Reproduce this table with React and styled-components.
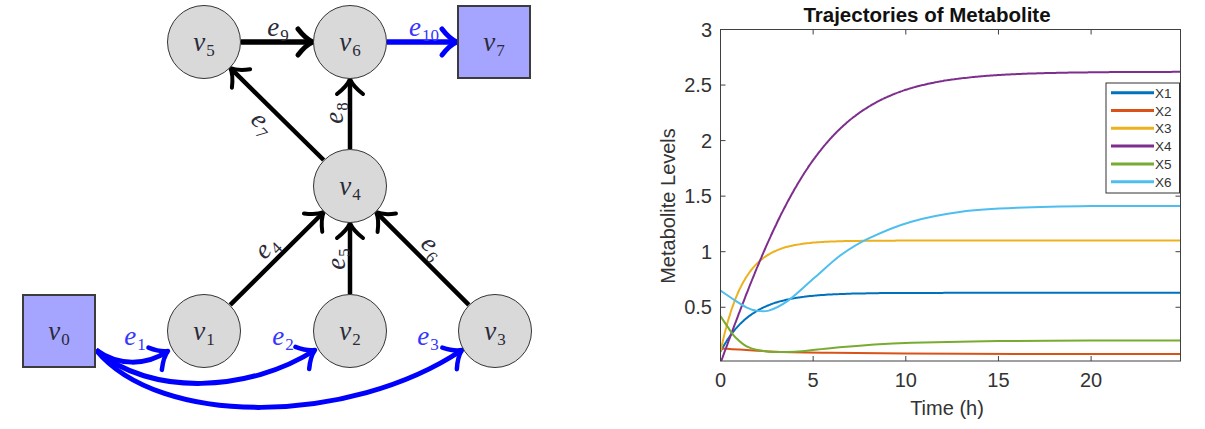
import React from "react";
import styled, { createGlobalStyle } from "styled-components";

const GlobalStyle = createGlobalStyle`
  html, body {
    margin: 0;
    padding: 0;
    background: #fff;
  }
  body {
    font-family: "Liberation Sans", Arial, sans-serif;
  }
`;

const Figure = styled.div`
  display: flex;
  width: 1205px;
  height: 429px;
  background: #fff;
  overflow: hidden;
`;

const GraphPanel = styled.div`
  position: relative;
  flex: none;
  width: 640px;
  height: 429px;
`;

const EdgeLayer = styled.svg`
  position: absolute;
  left: 0;
  top: 0;
  overflow: visible;
`;

const Node = styled.div`
  position: absolute;
  left: ${(p) => p.$x - 37}px;
  top: ${(p) => p.$y - 37}px;
  width: 74px;
  height: 74px;
  box-sizing: border-box;
  display: flex;
  align-items: center;
  justify-content: center;
  border: ${(p) => (p.$square ? "2px solid #3c3c3c" : "1.5px solid #343434")};
  border-radius: ${(p) => (p.$square ? "0" : "50%")};
  background: ${(p) => (p.$square ? "#a5a5ff" : "#d9d9d9")};
`;

const MathText = styled.span`
  display: inline-flex;
  align-items: baseline;
  font-family: "Liberation Serif", "DejaVu Serif", serif;
  font-style: italic;
  font-size: 27px;
  line-height: 1;
  white-space: nowrap;
  color: ${(p) => (p.$blue ? "#3535ff" : "#2a2a38")};
`;

const Sub = styled.span`
  font-style: normal;
  font-size: 17px;
  position: relative;
  top: 5px;
  margin-left: 1px;
`;

const EdgeLabel = styled.div`
  position: absolute;
  left: ${(p) => p.$x}px;
  top: ${(p) => p.$y}px;
  transform: translate(-50%, -50%) rotate(${(p) => p.$rot || 0}deg);
`;

const ChartPanel = styled.div`
  flex: none;
  width: 565px;
  height: 429px;
`;

const PlotSvg = styled.svg`
  display: block;
  font-family: "Liberation Sans", Arial, sans-serif;
`;

// ---------- graph data ----------
const R = 37;
const nodes = [
  { id: "0", x: 59, y: 331, square: true },
  { id: "1", x: 204, y: 331 },
  { id: "2", x: 350, y: 331 },
  { id: "3", x: 495, y: 331 },
  { id: "4", x: 350, y: 186 },
  { id: "5", x: 204, y: 42 },
  { id: "6", x: 350, y: 42 },
  { id: "7", x: 494, y: 42, square: true },
];
const pos = Object.fromEntries(nodes.map((n) => [n.id, n]));

const straightEdges = [
  { from: "1", to: "4" },
  { from: "2", to: "4" },
  { from: "3", to: "4" },
  { from: "4", to: "5" },
  { from: "4", to: "6" },
  { from: "5", to: "6", w: 5.5 },
  { from: "6", to: "7", w: 5.5, blue: true },
];

const curvedEdges = [
  { d: "M96,350 C118,366 146,366 168,351", tip: [168, 351], angle: -31 },
  { d: "M96,350 C150,397 250,392 315,350", tip: [315, 350], angle: -32 },
  { d: "M96,350 C160,428 350,425 462,350", tip: [462, 350], angle: -34 },
];

const edgeLabels = [
  { n: "1", x: 135, y: 336, blue: true },
  { n: "2", x: 283, y: 336, blue: true },
  { n: "3", x: 428, y: 336, blue: true },
  { n: "4", x: 266, y: 247, rot: -45 },
  { n: "5", x: 336, y: 259, rot: -90 },
  { n: "6", x: 433, y: 247, rot: 48 },
  { n: "7", x: 263, y: 123, rot: 48 },
  { n: "8", x: 334, y: 113, rot: -90 },
  { n: "9", x: 278, y: 27 },
  { n: "10", x: 424, y: 27, blue: true },
];

function ArrowHead({ x, y, angle, color, w }) {
  return (
    <path
      d="M-15,-13 C-10,-6.5 -4.5,-1.8 0,0 C-4.5,1.8 -10,6.5 -15,13"
      transform={`translate(${x},${y}) rotate(${angle})`}
      fill="none"
      stroke={color}
      strokeWidth={w}
      strokeLinecap="round"
      strokeLinejoin="round"
    />
  );
}

function StraightEdge({ from, to, w = 4.5, blue }) {
  const a = pos[from];
  const b = pos[to];
  const dx = b.x - a.x;
  const dy = b.y - a.y;
  const len = Math.hypot(dx, dy);
  const ux = dx / len;
  const uy = dy / len;
  const color = blue ? "#0000ff" : "#000";
  const sx = a.x + ux * R;
  const sy = a.y + uy * R;
  const tx = b.x - ux * R;
  const ty = b.y - uy * R;
  const angle = (Math.atan2(dy, dx) * 180) / Math.PI;
  return (
    <g>
      <line x1={sx} y1={sy} x2={tx - ux * 2} y2={ty - uy * 2} stroke={color} strokeWidth={w} />
      <ArrowHead x={tx} y={ty} angle={angle} color={color} w={w - 0.5} />
    </g>
  );
}

function NetworkGraph() {
  return (
    <GraphPanel>
      <EdgeLayer width="640" height="429">
        {curvedEdges.map((e, i) => (
          <g key={i}>
            <path d={e.d} fill="none" stroke="#0000ff" strokeWidth="5" />
            <ArrowHead x={e.tip[0]} y={e.tip[1]} angle={e.angle} color="#0000ff" w={4.5} />
          </g>
        ))}
        {straightEdges.map((e) => (
          <StraightEdge key={e.from + e.to} {...e} />
        ))}
      </EdgeLayer>
      {nodes.map((n) => (
        <Node key={n.id} $x={n.x} $y={n.y} $square={n.square}>
          <MathText>
            v<Sub>{n.id}</Sub>
          </MathText>
        </Node>
      ))}
      {edgeLabels.map((l) => (
        <EdgeLabel key={l.n} $x={l.x} $y={l.y} $rot={l.rot}>
          <MathText $blue={l.blue}>
            e<Sub>{l.n}</Sub>
          </MathText>
        </EdgeLabel>
      ))}
    </GraphPanel>
  );
}

// ---------- chart ----------
const X0 = 720.5;
const X1 = 1180.5;
const Y0 = 29.5;
const Y1 = 361;
const px = (t) => X0 + t * 18.53;
const py = (v) => Y0 + (3 - v) * 111.1;
const TMAX = 24.83;

function sampled(fn) {
  const pts = [];
  for (let t = 0; t <= TMAX + 0.001; t += 0.1) pts.push([t, fn(t)]);
  return pts;
}

function smoothPath(raw) {
  const p = raw.map(([t, v]) => [px(t), py(v)]);
  let d = `M${p[0][0].toFixed(1)},${p[0][1].toFixed(1)}`;
  for (let i = 0; i < p.length - 1; i++) {
    const p0 = p[i - 1] || p[i];
    const p1 = p[i];
    const p2 = p[i + 1];
    const p3 = p[i + 2] || p2;
    const c1 = [p1[0] + (p2[0] - p0[0]) / 6, p1[1] + (p2[1] - p0[1]) / 6];
    const c2 = [p2[0] - (p3[0] - p1[0]) / 6, p2[1] - (p3[1] - p1[1]) / 6];
    d += ` C${c1.map((n) => n.toFixed(1))} ${c2.map((n) => n.toFixed(1))} ${p2.map((n) => n.toFixed(1))}`;
  }
  return d;
}

const series = [
  {
    name: "X1",
    color: "#0072bd",
    pts: sampled((t) => 0.63 - 0.53 * Math.exp(-0.6 * t)),
  },
  {
    name: "X2",
    color: "#d95319",
    pts: [[0, 0.13], [1, 0.12], [3, 0.1], [6, 0.09], [10, 0.084], [16, 0.08], [TMAX, 0.08]],
  },
  {
    name: "X3",
    color: "#edb120",
    pts: sampled((t) => 1.1 - 1.0 * Math.exp(-0.8 * t)),
  },
  {
    name: "X4",
    color: "#7e2f8e",
    pts: sampled((t) => 2.62 * Math.tanh(0.172 * t)),
  },
  {
    name: "X5",
    color: "#77ac30",
    pts: [[0, 0.42], [0.4, 0.32], [0.8, 0.23], [1.5, 0.14], [2.6, 0.1], [4, 0.1], [5.8, 0.13], [8, 0.16], [10.3, 0.18], [15, 0.196], [20, 0.2], [TMAX, 0.2]],
  },
  {
    name: "X6",
    color: "#4dbeee",
    pts: [[0, 0.65], [0.8, 0.56], [1.4, 0.5], [1.9, 0.47], [2.6, 0.47], [3.65, 0.56], [5.1, 0.77], [6.5, 0.97], [8, 1.12], [10.3, 1.27], [13, 1.36], [16, 1.395], [20, 1.41], [TMAX, 1.41]],
  },
];

const yTicks = [0.5, 1, 1.5, 2, 2.5, 3];
const xTicks = [0, 5, 10, 15, 20];

function MetaboliteChart() {
  return (
    <ChartPanel>
      <PlotSvg width="565" height="429" viewBox="640 0 565 429">
        <defs>
          <clipPath id="plotArea">
            <rect x={X0} y={Y0} width={X1 - X0} height={Y1 - Y0} />
          </clipPath>
        </defs>
        <text x="927" y="22" textAnchor="middle" fontSize="20.5" fontWeight="bold" fill="#111">
          Trajectories of Metabolite
        </text>
        <g clipPath="url(#plotArea)">
          {series.map((s) => (
            <path key={s.name} d={smoothPath(s.pts)} fill="none" stroke={s.color} strokeWidth="2" />
          ))}
        </g>
        <rect x={X0} y={Y0} width={X1 - X0} height={Y1 - Y0} fill="none" stroke="#404040" strokeWidth="1" />
        {yTicks.map((v) => (
          <g key={v}>
            <line x1={X0} x2={X0 + 5} y1={py(v)} y2={py(v)} stroke="#404040" />
            <line x1={X1} x2={X1 - 5} y1={py(v)} y2={py(v)} stroke="#404040" />
            <text x="712" y={py(v) + 7} textAnchor="end" fontSize="20" fill="#333">
              {v}
            </text>
          </g>
        ))}
        {xTicks.map((t) => (
          <g key={t}>
            <line x1={px(t)} x2={px(t)} y1={Y1} y2={Y1 - 5} stroke="#404040" />
            <line x1={px(t)} x2={px(t)} y1={Y0} y2={Y0 + 5} stroke="#404040" />
            <text x={px(t)} y="387" textAnchor="middle" fontSize="20" fill="#333">
              {t}
            </text>
          </g>
        ))}
        <text x="947" y="415" textAnchor="middle" fontSize="20" fill="#333">
          Time (h)
        </text>
        <text
          x="0"
          y="0"
          transform="translate(675,206) rotate(-90)"
          textAnchor="middle"
          fontSize="20"
          fill="#333"
        >
          Metabolite Levels
        </text>
        <g>
          <rect x="1106" y="83" width="73.5" height="110" fill="#fff" stroke="#333" strokeWidth="1" />
          {series.map((s, i) => {
            const y = 92.7 + i * 17.8;
            return (
              <g key={s.name}>
                <line x1="1111" x2="1154" y1={y} y2={y} stroke={s.color} strokeWidth="3" />
                <text x="1155" y={y + 5} fontSize="13.5" fill="#333">
                  {s.name}
                </text>
              </g>
            );
          })}
        </g>
      </PlotSvg>
    </ChartPanel>
  );
}

export default function App() {
  return (
    <>
      <GlobalStyle />
      <Figure>
        <NetworkGraph />
        <MetaboliteChart />
      </Figure>
    </>
  );
}
